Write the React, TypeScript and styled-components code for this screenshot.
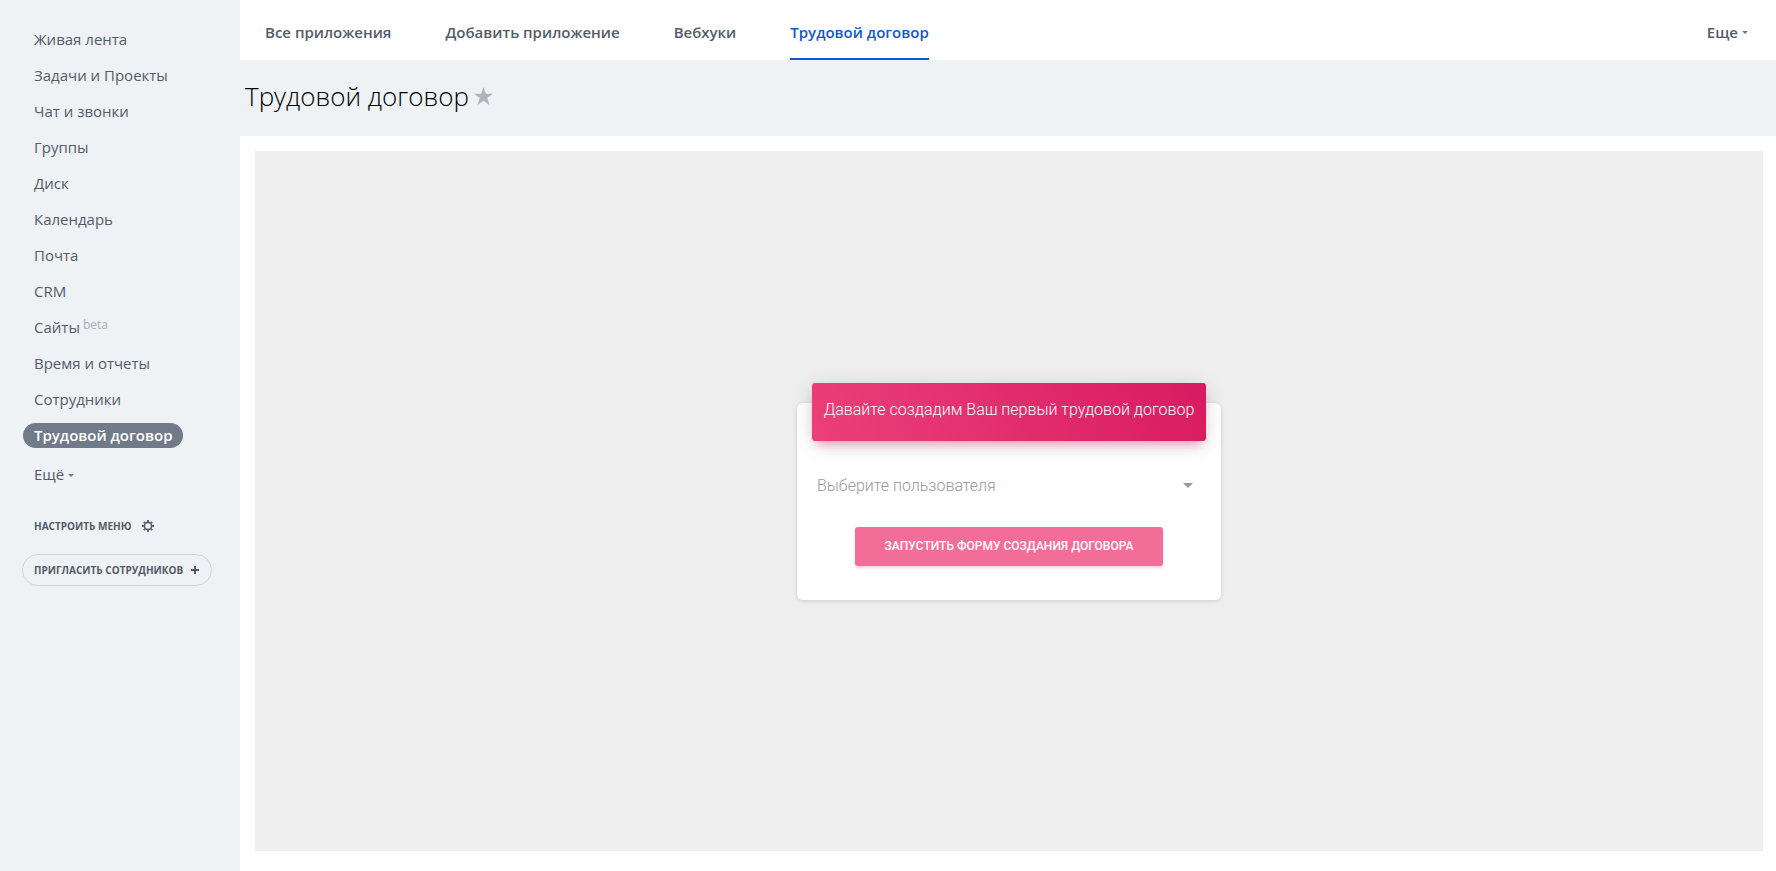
import React from "react";
import styled, { createGlobalStyle } from "styled-components";

const GlobalStyle = createGlobalStyle`
  * { box-sizing: border-box; }
  body {
    margin: 0;
    background: #fff;
    color: #535c69;
    font-family: "Open Sans", "Noto Sans", sans-serif;
    font-size: 15px;
  }
  button, select { font: inherit; color: inherit; margin: 0; }
`;

const Page = styled.div`
  display: flex;
  min-height: 100vh;
`;

const Sidebar = styled.aside`
  flex: 0 0 240px;
  padding: 21px 20px 22px 22px;
  background: #eef2f4;
`;

const Menu = styled.ul`
  margin: 0;
  padding: 0;
  list-style: none;
`;

const MenuItem = styled.li`
  display: flex;
  align-items: center;
  height: 36px;
`;

const MenuLink = styled.a<{ $active?: boolean }>`
  margin-left: 1px;
  padding: 0 11px;
  border-radius: 13px;
  line-height: 25px;
  text-decoration: none;
  white-space: nowrap;
  color: ${(p) => (p.$active ? "#fff" : "#535c69")};
  background: ${(p) => (p.$active ? "#717a88" : "transparent")};
  font-weight: ${(p) => (p.$active ? 600 : 400)};
`;

const Beta = styled.sup`
  margin-left: 3px;
  font-size: 12px;
  line-height: 12px;
  vertical-align: 4px;
  color: #a8adb4;
`;

const PlainButton = styled.button`
  display: flex;
  align-items: center;
  gap: 4px;
  padding: 0;
  border: 0;
  background: none;
  cursor: pointer;
`;

const MoreItems = styled(PlainButton)`
  height: 36px;
  margin-top: 3px;
  padding-left: 12px;
`;

const Caret = styled.span`
  margin-top: 2px;
  border: 3px solid transparent;
  border-top-color: #717a88;
  border-bottom: 0;
`;

const SmallAction = styled(PlainButton)`
  height: 32px;
  gap: 11px;
  padding: 0 12px;
  font-size: 10px;
  font-weight: 700;
  text-transform: uppercase;
  white-space: nowrap;
`;

const SetupMenu = styled(SmallAction)`
  margin-top: 18px;
`;

const Invite = styled(SmallAction)`
  margin-top: 12px;
  padding: 0 12px 0 11px;
  gap: 8px;
  border: 1px solid #d0d5d9;
  border-radius: 16px;
`;

const Main = styled.div`
  flex: 1;
  min-width: 0;
  display: flex;
  flex-direction: column;
`;

const TopBar = styled.nav`
  display: flex;
  gap: 54px;
  height: 60px;
  padding: 5px 28px 0 25px;
`;

const Tab = styled.a<{ $active?: boolean }>`
  display: flex;
  align-items: center;
  border-bottom: 2px solid ${(p) => (p.$active ? "#1058d0" : "transparent")};
  color: ${(p) => (p.$active ? "#1058d0" : "#535c69")};
  font-weight: 600;
  text-decoration: none;
  white-space: nowrap;
`;

const MoreTabs = styled(PlainButton)`
  margin-left: auto;
  padding-bottom: 2px;
  font-weight: 600;
`;

const TitleBar = styled.header`
  display: flex;
  align-items: center;
  gap: 5px;
  height: 76px;
  padding: 0 5px 4px;
  background: #eef2f4;
`;

const Title = styled.h1`
  margin: 0;
  color: #000;
  font-size: 26px;
  font-weight: 300;
  line-height: 36px;
`;

const Content = styled.main`
  flex: 1;
  display: flex;
  padding: 15px 13px 20px 15px;
`;

const AppFrame = styled.section`
  flex: 1;
  display: flex;
  align-items: center;
  justify-content: center;
  background: #eee;
  font-family: Roboto, sans-serif;
`;

const Card = styled.form`
  width: 424px;
  padding: 0 15px 34px;
  border-radius: 6px;
  background: #fff;
  box-shadow: 0 1px 4px rgba(0, 0, 0, 0.14);
`;

const CardHeader = styled.h2`
  display: flex;
  justify-content: center;
  margin: -20px 0 0;
  padding: 15px 0 19px;
  border-radius: 3px;
  background: linear-gradient(60deg, #ec407a, #d81b60);
  box-shadow: 0 4px 20px rgba(0, 0, 0, 0.14), 0 7px 10px -5px rgba(233, 30, 99, 0.4);
  color: #fff;
  font-size: 16px;
  font-weight: 300;
  line-height: 24px;
  white-space: nowrap;
`;

const SelectField = styled.label`
  display: flex;
  align-items: center;
  margin: 25px 13px 21px 5px;
`;

const Select = styled.select`
  flex: 1;
  height: 40px;
  padding: 0;
  border: 0;
  outline: 0;
  appearance: none;
  background: transparent;
  color: #999;
  font-size: 16px;
  font-weight: 300;
`;

const SelectArrow = styled.span`
  border: 5px solid transparent;
  border-top-color: #999;
  border-bottom: 0;
`;

const Submit = styled.button`
  display: block;
  height: 39px;
  margin: 0 auto;
  padding: 0 30px;
  border: 0;
  border-radius: 3px;
  background: #f26e99;
  box-shadow: 0 2px 3px rgba(233, 30, 99, 0.2);
  color: #fff;
  font-size: 12px;
  font-weight: 500;
  text-transform: uppercase;
  white-space: nowrap;
`;

const menu = [
  "Живая лента", "Задачи и Проекты", "Чат и звонки", "Группы", "Диск", "Календарь",
  "Почта", "CRM", "Сайты", "Время и отчеты", "Сотрудники", "Трудовой договор",
];
const tabs = ["Все приложения", "Добавить приложение", "Вебхуки", "Трудовой договор"];
const current = "Трудовой договор";

const GearIcon = () => (
  <svg width="12" height="12" viewBox="0 0 12 12" fill="none" stroke="#535c69" aria-hidden="true">
    <circle cx="6" cy="6" r="3.6" strokeWidth="1.6" />
    <path
      d="M6 0v2M6 10v2M0 6h2M10 6h2M1.8 1.8l1.3 1.3M8.9 8.9l1.3 1.3M1.8 10.2l1.3-1.3M8.9 3.1l1.3-1.3"
      strokeWidth="1.8"
    />
  </svg>
);

const PlusIcon = () => (
  <svg width="8" height="8" viewBox="0 0 8 8" stroke="#535c69" strokeWidth="2" aria-hidden="true">
    <path d="M4 0v8M0 4h8" />
  </svg>
);

const StarIcon = () => (
  <svg width="19" height="19" viewBox="0 0 19 19" fill="#afb4bc" aria-hidden="true">
    <path d="M9.500 0L11.800 6.800H19L13.200 11.100L15.400 18L9.500 13.800L3.600 18L5.800 11.100L0 6.800H7.200Z" />
  </svg>
);

export default function App() {
  return (
    <>
      <GlobalStyle />
      <Page>
        <Sidebar>
          <Menu>
            {menu.map((name) => (
              <MenuItem key={name}>
                <MenuLink href="#" $active={name === current}>
                  {name}
                  {name === "Сайты" && <Beta>beta</Beta>}
                </MenuLink>
              </MenuItem>
            ))}
          </Menu>
          <MoreItems type="button">Ещё <Caret /></MoreItems>
          <SetupMenu type="button">Настроить меню <GearIcon /></SetupMenu>
          <Invite type="button">Пригласить сотрудников <PlusIcon /></Invite>
        </Sidebar>
        <Main>
          <TopBar>
            {tabs.map((name) => (
              <Tab key={name} href="#" $active={name === current}>{name}</Tab>
            ))}
            <MoreTabs type="button">Еще <Caret /></MoreTabs>
          </TopBar>
          <TitleBar>
            <Title>Трудовой договор</Title>
            <StarIcon />
          </TitleBar>
          <Content>
            <AppFrame>
              <Card>
                <CardHeader>Давайте создадим Ваш первый трудовой договор</CardHeader>
                <SelectField>
                  <Select aria-label="Выберите пользователя">
                    <option>Выберите пользователя</option>
                  </Select>
                  <SelectArrow />
                </SelectField>
                <Submit type="button">Запустить форму создания договора</Submit>
              </Card>
            </AppFrame>
          </Content>
        </Main>
      </Page>
    </>
  );
}
